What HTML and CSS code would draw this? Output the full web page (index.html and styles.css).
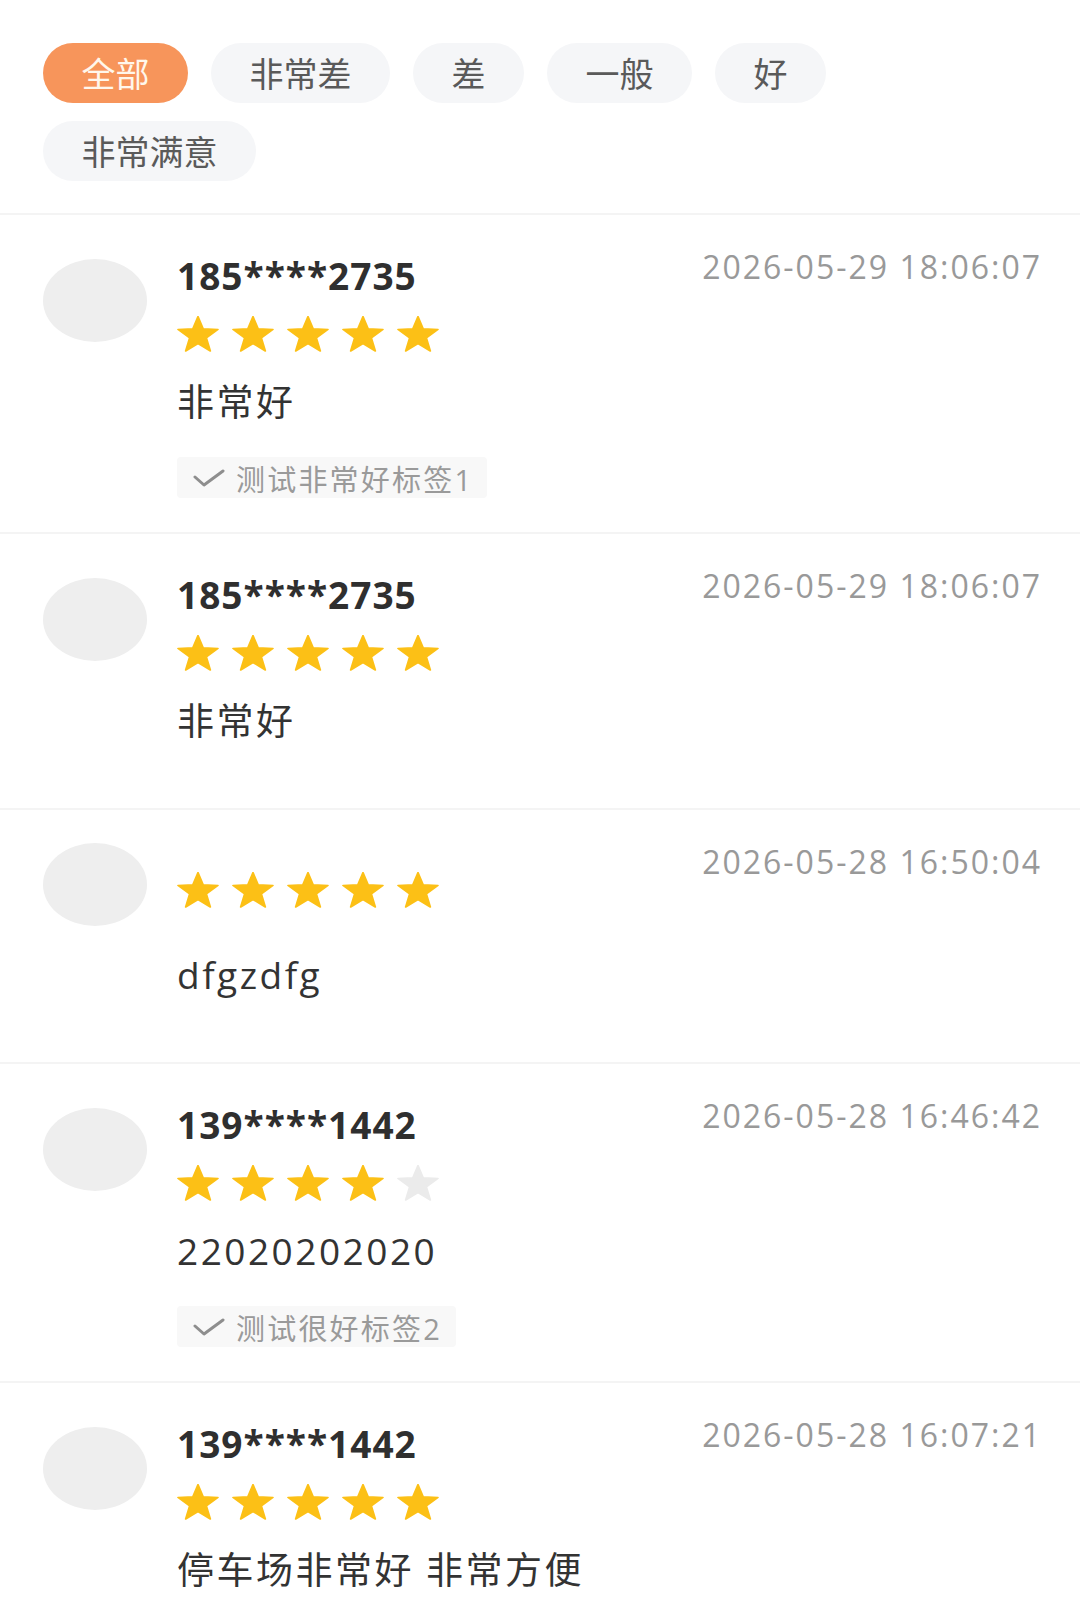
FILE: index.html
```html
<!DOCTYPE html>
<html lang="zh-CN">
<head>
<meta charset="utf-8">
<title>评价</title>
<link rel="stylesheet" href="styles.css">
</head>
<body>
<svg width="0" height="0" class="defs" aria-hidden="true">
  <defs>
    <polygon id="star" points="19.5,0.6 24.31,13.07 38.05,13.67 27.29,22.23 30.96,35.48 19.5,27.89 8.04,35.48 11.71,22.23 0.95,13.67 14.69,13.07"/>
  </defs>
</svg>

<section class="filters">
  <span class="chip active">全部</span>
  <span class="chip">非常差</span>
  <span class="chip">差</span>
  <span class="chip">一般</span>
  <span class="chip">好</span>
  <span class="chip">非常满意</span>
</section>

<section class="review">
  <div class="head">
    <div class="avatar"></div>
    <div class="who">
      <div class="name">185****2735</div>
      <div class="stars">
        <svg class="star on" viewBox="0 0 39 36.5" preserveAspectRatio="none"><use href="#star"/></svg>
        <svg class="star on" viewBox="0 0 39 36.5" preserveAspectRatio="none"><use href="#star"/></svg>
        <svg class="star on" viewBox="0 0 39 36.5" preserveAspectRatio="none"><use href="#star"/></svg>
        <svg class="star on" viewBox="0 0 39 36.5" preserveAspectRatio="none"><use href="#star"/></svg>
        <svg class="star on" viewBox="0 0 39 36.5" preserveAspectRatio="none"><use href="#star"/></svg>
      </div>
    </div>
    <div class="date">2026-05-29 18:06:07</div>
  </div>
  <div class="content">非常好</div>
  <div class="tags">
    <span class="tag"><svg class="check" viewBox="0 0 32 20"><path d="M2 9 L11 17 L30 3"/></svg>测试非常好标签1</span>
  </div>
</section>

<section class="review">
  <div class="head">
    <div class="avatar"></div>
    <div class="who">
      <div class="name">185****2735</div>
      <div class="stars">
        <svg class="star on" viewBox="0 0 39 36.5" preserveAspectRatio="none"><use href="#star"/></svg>
        <svg class="star on" viewBox="0 0 39 36.5" preserveAspectRatio="none"><use href="#star"/></svg>
        <svg class="star on" viewBox="0 0 39 36.5" preserveAspectRatio="none"><use href="#star"/></svg>
        <svg class="star on" viewBox="0 0 39 36.5" preserveAspectRatio="none"><use href="#star"/></svg>
        <svg class="star on" viewBox="0 0 39 36.5" preserveAspectRatio="none"><use href="#star"/></svg>
      </div>
    </div>
    <div class="date">2026-05-29 18:06:07</div>
  </div>
  <div class="content">非常好</div>
</section>

<section class="review">
  <div class="head">
    <div class="avatar"></div>
    <div class="who">
      <div class="name"></div>
      <div class="stars">
        <svg class="star on" viewBox="0 0 39 36.5" preserveAspectRatio="none"><use href="#star"/></svg>
        <svg class="star on" viewBox="0 0 39 36.5" preserveAspectRatio="none"><use href="#star"/></svg>
        <svg class="star on" viewBox="0 0 39 36.5" preserveAspectRatio="none"><use href="#star"/></svg>
        <svg class="star on" viewBox="0 0 39 36.5" preserveAspectRatio="none"><use href="#star"/></svg>
        <svg class="star on" viewBox="0 0 39 36.5" preserveAspectRatio="none"><use href="#star"/></svg>
      </div>
    </div>
    <div class="date">2026-05-28 16:50:04</div>
  </div>
  <div class="content">dfgzdfg</div>
</section>

<section class="review">
  <div class="head">
    <div class="avatar"></div>
    <div class="who">
      <div class="name">139****1442</div>
      <div class="stars">
        <svg class="star on" viewBox="0 0 39 36.5" preserveAspectRatio="none"><use href="#star"/></svg>
        <svg class="star on" viewBox="0 0 39 36.5" preserveAspectRatio="none"><use href="#star"/></svg>
        <svg class="star on" viewBox="0 0 39 36.5" preserveAspectRatio="none"><use href="#star"/></svg>
        <svg class="star on" viewBox="0 0 39 36.5" preserveAspectRatio="none"><use href="#star"/></svg>
        <svg class="star off" viewBox="0 0 39 36.5" preserveAspectRatio="none"><use href="#star"/></svg>
      </div>
    </div>
    <div class="date">2026-05-28 16:46:42</div>
  </div>
  <div class="content">22020202020</div>
  <div class="tags">
    <span class="tag"><svg class="check" viewBox="0 0 32 20"><path d="M2 9 L11 17 L30 3"/></svg>测试很好标签2</span>
  </div>
</section>

<section class="review">
  <div class="head">
    <div class="avatar"></div>
    <div class="who">
      <div class="name">139****1442</div>
      <div class="stars">
        <svg class="star on" viewBox="0 0 39 36.5" preserveAspectRatio="none"><use href="#star"/></svg>
        <svg class="star on" viewBox="0 0 39 36.5" preserveAspectRatio="none"><use href="#star"/></svg>
        <svg class="star on" viewBox="0 0 39 36.5" preserveAspectRatio="none"><use href="#star"/></svg>
        <svg class="star on" viewBox="0 0 39 36.5" preserveAspectRatio="none"><use href="#star"/></svg>
        <svg class="star on" viewBox="0 0 39 36.5" preserveAspectRatio="none"><use href="#star"/></svg>
      </div>
    </div>
    <div class="date">2026-05-28 16:07:21</div>
  </div>
  <div class="content">停车场非常好 非常方便</div>
</section>
</body>
</html>
```

FILE: styles.css
```css
* {
  box-sizing: border-box;
}

html, body {
  margin: 0;
  padding: 0;
  background: #ffffff;
}

body {
  font-family: "Open Sans", "Noto Sans CJK SC", sans-serif;
  color: #333333;
  overflow: hidden;
}

.defs {
  position: absolute;
  width: 0;
  height: 0;
}

/* ---------- filter chips ---------- */
.filters {
  display: flex;
  flex-wrap: wrap;
  gap: 18px 23px;
  padding: 43px 40px 32px 43px;
  border-bottom: 2px solid #f4f4f4;
}

.chip {
  display: inline-block;
  height: 60px;
  line-height: 60px;
  padding: 0 38.5px;
  border-radius: 30px;
  background: #f5f6f8;
  color: #5a5a5a;
  font-family: "Noto Sans CJK SC", sans-serif;
  font-size: 34px;
}

.chip.active {
  background: #f7955b;
  color: #fff7ec;
}

/* ---------- review ---------- */
.review {
  padding: 33px 40px 34px 43px;
  border-bottom: 2px solid #f4f4f4;
}

.head {
  display: flex;
  align-items: center;
}

.avatar {
  flex: none;
  width: 104px;
  height: 83px;
  border-radius: 50%;
  background: #eeeeee;
  margin-right: 30px;
}

.who {
  flex: 1;
  min-width: 0;
}

.name {
  font-size: 37px;
  font-weight: 700;
  line-height: 56px;
  letter-spacing: 1px;
  color: #2f2f2f;
}

.name:empty {
  display: none;
}

.stars {
  display: flex;
  gap: 13px;
  margin-top: 10px;
  height: 39px;
  align-items: center;
}

.star {
  width: 42px;
  height: 36px;
  display: block;
}

.star.on {
  fill: #fcc016;
  stroke: #fcc016;
  stroke-width: 1.6;
  stroke-linejoin: round;
}

.star.off {
  fill: #ebebeb;
  stroke: #ebebeb;
  stroke-width: 1.6;
  stroke-linejoin: round;
}

.date {
  align-self: flex-start;
  flex: none;
  font-size: 32px;
  line-height: 38px;
  letter-spacing: 2px;
  margin-right: -2px;
  color: #999999;
}

.content {
  margin: 24px 0 30px 134px;
  font-size: 37px;
  line-height: 50px;
  letter-spacing: 2.5px;
  color: #333333;
}

.content:last-child {
  margin-bottom: 28px;
}

.tags {
  margin-left: 134px;
  display: flex;
  flex-wrap: wrap;
  gap: 12px;
}

.tag {
  display: inline-flex;
  align-items: center;
  height: 41px;
  padding: 0 14px 0 16px;
  border-radius: 4px;
  background: #f8f8f8;
  color: #9a9a9a;
  font-size: 29px;
  letter-spacing: 2.2px;
}

.check {
  width: 32px;
  height: 20px;
  margin-right: 11px;
  fill: none;
  stroke: #8e8e8e;
  stroke-width: 3;
  stroke-linecap: round;
  stroke-linejoin: round;
}
```
